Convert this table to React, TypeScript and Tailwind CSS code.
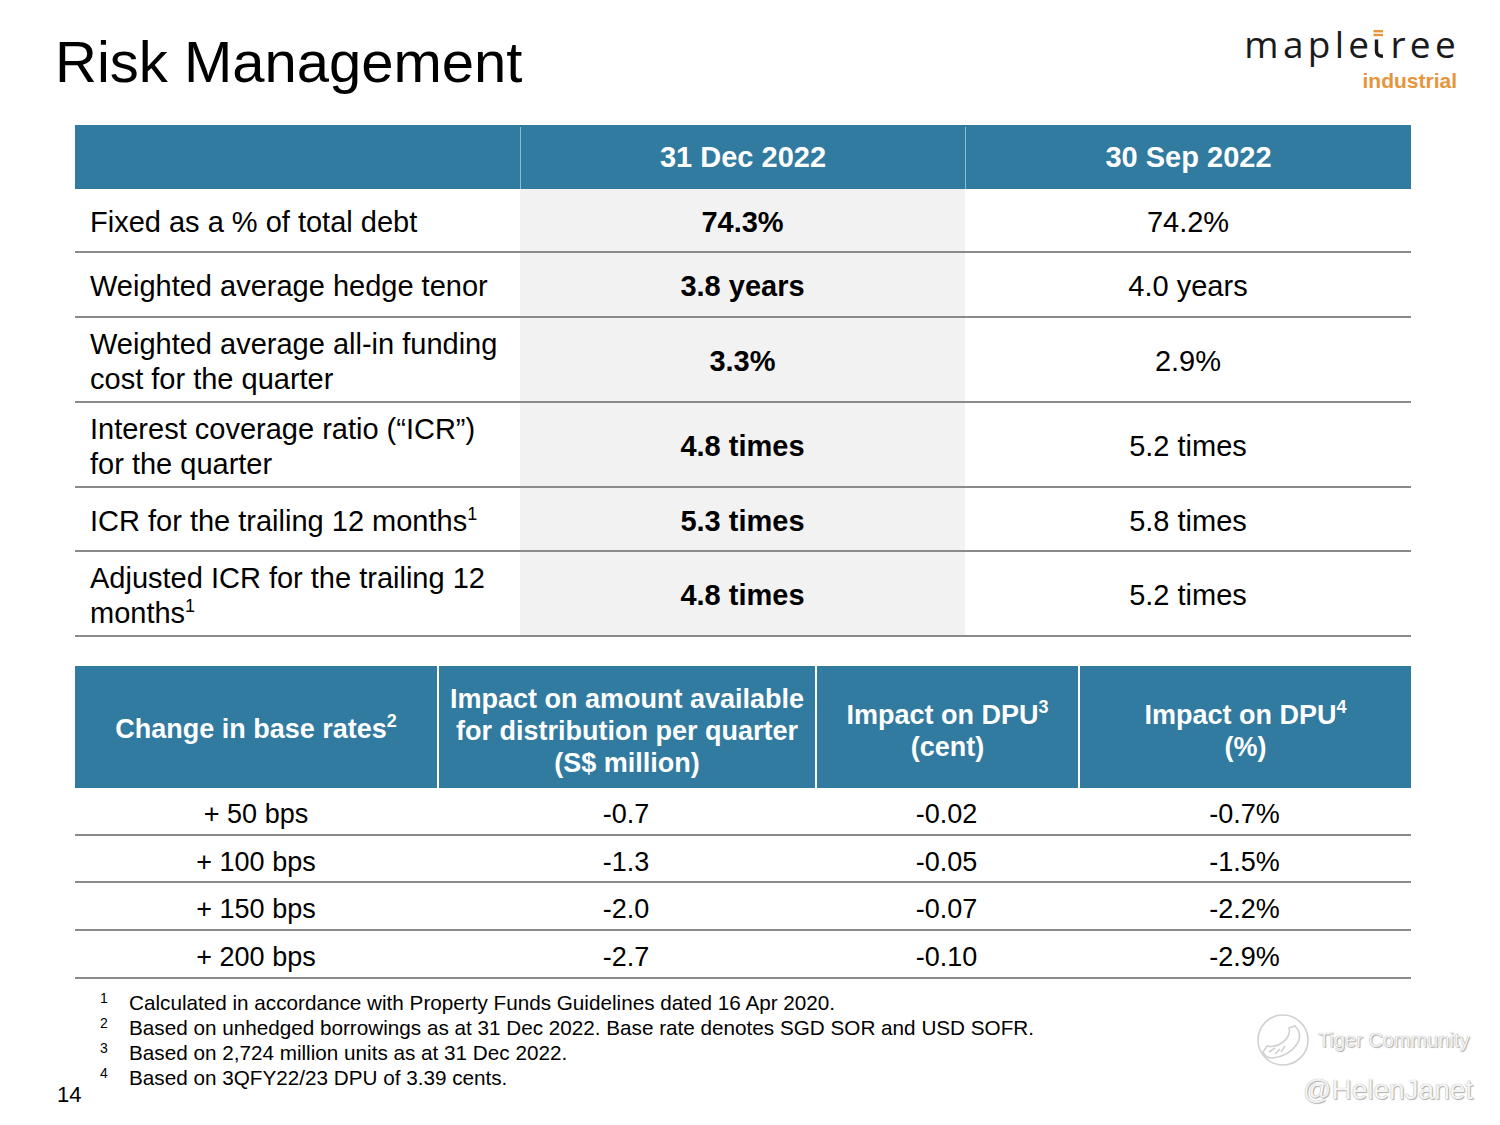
import type { ReactNode } from "react";

type HedgeRow = {
  label: ReactNode;
  now: string;
  prev: string;
  h: string;
};

const sup1 = <sup className="text-[18px] -top-[11px]">1</sup>;

const hedgeRows: HedgeRow[] = [
  { label: "Fixed as a % of total debt", now: "74.3%", prev: "74.2%", h: "h-[64px]" },
  { label: "Weighted average hedge tenor", now: "3.8 years", prev: "4.0 years", h: "h-[65px]" },
  {
    label: (
      <>
        Weighted average all-in funding
        <br />
        cost for the quarter
      </>
    ),
    now: "3.3%",
    prev: "2.9%",
    h: "h-[85px]",
  },
  {
    label: (
      <>
        Interest coverage ratio (“ICR”)
        <br />
        for the quarter
      </>
    ),
    now: "4.8 times",
    prev: "5.2 times",
    h: "h-[85px]",
  },
  {
    label: <>ICR for the trailing 12 months{sup1}</>,
    now: "5.3 times",
    prev: "5.8 times",
    h: "h-[64px]",
  },
  {
    label: (
      <>
        Adjusted ICR for the trailing 12
        <br />
        months{sup1}
      </>
    ),
    now: "4.8 times",
    prev: "5.2 times",
    h: "h-[85px]",
  },
];

const rateRows = [
  { bps: "+ 50 bps", amt: "-0.7", cent: "-0.02", pct: "-0.7%", h: "h-[48px]" },
  { bps: "+ 100 bps", amt: "-1.3", cent: "-0.05", pct: "-1.5%", h: "h-[47px]" },
  { bps: "+ 150 bps", amt: "-2.0", cent: "-0.07", pct: "-2.2%", h: "h-[48px]" },
  { bps: "+ 200 bps", amt: "-2.7", cent: "-0.10", pct: "-2.9%", h: "h-[48px]" },
];

const notes = [
  "Calculated in accordance with Property Funds Guidelines dated 16 Apr 2020.",
  "Based on unhedged borrowings as at 31 Dec 2022. Base rate denotes SGD SOR and USD SOFR.",
  "Based on 2,724 million units as at 31 Dec 2022.",
  "Based on 3QFY22/23 DPU of 3.39 cents.",
];

function Logo() {
  return (
    <div className="flex flex-col items-end pt-[22px] pr-[40px]">
      <div className="font-['Open_Sans',sans-serif] font-medium text-[37px] leading-[44px] text-[#1a1a1a] tracking-[4.3px] whitespace-nowrap">
        maple
        {/* stylised t with orange cap */}
        <svg width="13" height="28" viewBox="0 0 13 28" className="inline-block align-baseline mr-[5px] -ml-[1px]">
          <rect x="1.5" y="0" width="9.5" height="2.4" fill="#e6953b" />
          <rect x="1.5" y="3.8" width="9.5" height="2.4" fill="#e6953b" />
          <path d="M4.5 9.5 V21 Q4.5 26.3 11 26.3" fill="none" stroke="#1a1a1a" strokeWidth="3.4" />
        </svg>
        ree
      </div>
      <div className="font-['Liberation_Sans',Arial,sans-serif] font-bold text-[21px] leading-[22px] text-[#e6953b] mt-[4px] mr-[3px]">
        industrial
      </div>
    </div>
  );
}

function Watermark() {
  return (
    <div className="absolute left-[1255px] top-[1012px] w-[230px] h-[100px] pointer-events-none">
      <div className="flex items-center">
        <svg width="56" height="56" viewBox="0 0 56 56">
          <g fill="none" stroke="#d0d0d0" strokeWidth="1.6">
            <circle cx="28" cy="28" r="25" />
            <path d="M40 14 Q48 22 42 32 Q34 44 18 46 Q10 46 8 40 L12 34 Q20 36 28 30 Q36 24 34 16 Z" />
            <path d="M14 40 L20 36 M20 42 L25 37 M26 40 L30 34" />
          </g>
        </svg>
        <span className="ml-[7px] font-['Liberation_Sans',Arial,sans-serif] text-[20px] text-[#f3f3f3] [text-shadow:0_0_1px_#9a9a9a,1px_1px_1px_#b0b0b0]">
          Tiger Community
        </span>
      </div>
      <div className="ml-[48px] mt-[6px] font-['Liberation_Sans',Arial,sans-serif] text-[28px] leading-[32px] text-[#f5f5f5] [text-shadow:0_0_1px_#9a9a9a,1px_1px_1px_#b0b0b0]">
        @HelenJanet
      </div>
    </div>
  );
}

export default function App() {
  return (
    <div className="relative w-[1500px] h-[1125px] bg-white text-black font-['Liberation_Sans',Arial,sans-serif]">
      <div className="flex justify-between h-[125px]">
        <h1 className="pl-[55px] pt-[33px] text-[58px] leading-[58px] font-normal">Risk Management</h1>
        <Logo />
      </div>

      {/* hedging table */}
      <div className="ml-[75px] w-[1336px]">
        <div className="grid grid-cols-[445px_445px_446px] h-[64px] pt-[2px] bg-[#317aa0] text-white font-bold text-[29px]">
          <div />
          <div className="flex items-center justify-center border-l border-[#8fbad2]">31 Dec 2022</div>
          <div className="flex items-center justify-center border-l border-[#8fbad2]">30 Sep 2022</div>
        </div>
        {hedgeRows.map((r, i) => (
          <div
            key={i}
            className={`grid grid-cols-[445px_445px_446px] border-b-2 border-[#8a8a8a] text-[29px] leading-[35px] ${r.h}`}
          >
            <div className="flex items-center pl-[15px] pt-[4px]">
              <div>{r.label}</div>
            </div>
            <div className="flex items-center justify-center bg-[#f2f2f2] font-bold pt-[4px]">{r.now}</div>
            <div className="flex items-center justify-center pt-[4px]">{r.prev}</div>
          </div>
        ))}
      </div>

      {/* sensitivity table */}
      <div className="ml-[75px] w-[1336px] mt-[29px]">
        <div className="grid grid-cols-[362px_378px_263px_333px] h-[122px] bg-[#317aa0] text-white font-bold text-[27px] leading-[32px] text-center">
          <div className="flex items-center justify-center pt-[4px]">
            <div>
              Change in base rates<sup className="text-[18px] -top-[11px]">2</sup>
            </div>
          </div>
          <div className="flex items-center justify-center border-l-2 border-white pt-[8px]">
            <div>
              Impact on amount available
              <br />
              for distribution per quarter
              <br />
              (S$ million)
            </div>
          </div>
          <div className="flex items-center justify-center border-l-2 border-white pt-[8px]">
            <div>
              Impact on DPU<sup className="text-[18px] -top-[11px]">3</sup>
              <br />
              (cent)
            </div>
          </div>
          <div className="flex items-center justify-center border-l-2 border-white pt-[8px]">
            <div>
              Impact on DPU<sup className="text-[18px] -top-[11px]">4</sup>
              <br />
              (%)
            </div>
          </div>
        </div>
        {rateRows.map((r) => (
          <div
            key={r.bps}
            className={`grid grid-cols-[362px_378px_263px_333px] border-b-2 border-[#8a8a8a] text-[27px] text-center items-center pt-[6px] ${r.h}`}
          >
            <div>{r.bps}</div>
            <div>{r.amt}</div>
            <div>{r.cent}</div>
            <div>{r.pct}</div>
          </div>
        ))}
      </div>

      {/* footnotes */}
      <div className="flex mt-[11px] pl-[57px]">
        <div className="w-[43px] flex items-end">
          <span className="text-[22px] leading-[22px] -mb-[16px]">14</span>
        </div>
        <div className="text-[20.7px] leading-[25px]">
          {notes.map((n, i) => (
            <div key={i} className="flex">
              <span className="w-[29px] text-[14px] leading-[14px] pt-[1px]">{i + 1}</span>
              <span>{n}</span>
            </div>
          ))}
        </div>
      </div>

      <Watermark />
    </div>
  );
}
